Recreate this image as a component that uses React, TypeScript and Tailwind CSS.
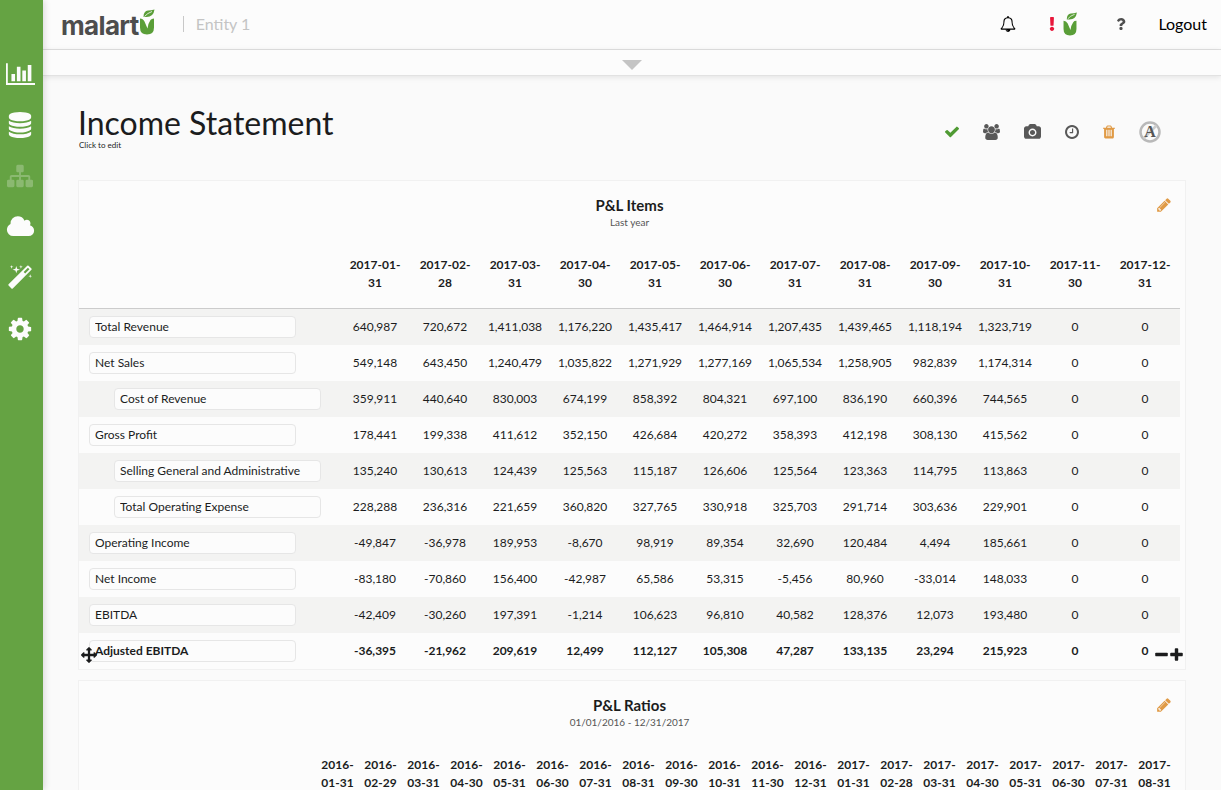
import React from 'react';
import { FaExclamation, FaQuestion } from 'react-icons/fa';

interface IconProps {
  d: string;
  viewBox?: string;
  className?: string;
}

const Icon: React.FC<IconProps> = ({ d, viewBox = '0 0 1792 1792', className }) => (
  <svg viewBox={viewBox} fill="currentColor" className={className} aria-hidden="true">
    <path d={d} />
  </svg>
);

const icons = {
  chart: 'M640 896v512h-256v-512h256zm384-512v1024h-256v-1024h256zm1024 1152v128h-2048v-1536h128v1408h1920zm-640-896v768h-256v-768h256zm384-384v1152h-256v-1152h256z',
  database: 'M896 768q237 0 443-43t325-127v170q0 69-103 128t-280 93.500-385 34.500-385-34.500-280-93.500-103-128v-170q119 84 325 127t443 43zm0 768q237 0 443-43t325-127v170q0 69-103 128t-280 93.500-385 34.500-385-34.500-280-93.500-103-128v-170q119 84 325 127t443 43zm0-384q237 0 443-43t325-127v170q0 69-103 128t-280 93.500-385 34.500-385-34.500-280-93.500-103-128v-170q119 84 325 127t443 43zm0-1152q208 0 385 34.500t280 93.500 103 128v128q0 69-103 128t-280 93.500-385 34.500-385-34.500-280-93.500-103-128v-128q0-69 103-128t280-93.500 385-34.500z',
  sitemap: 'M1792 1248v320q0 40-28 68t-68 28h-320q-40 0-68-28t-28-68v-320q0-40 28-68t68-28h96v-192h-512v192h96q40 0 68 28t28 68v320q0 40-28 68t-68 28h-320q-40 0-68-28t-28-68v-320q0-40 28-68t68-28h96v-192h-512v192h96q40 0 68 28t28 68v320q0 40-28 68t-68 28h-320q-40 0-68-28t-28-68v-320q0-40 28-68t68-28h96v-192q0-52 38-90t90-38h512v-192h-96q-40 0-68-28t-28-68v-320q0-40 28-68t68-28h320q40 0 68 28t28 68v320q0 40-28 68t-68 28h-96v192h512q52 0 90 38t38 90v192h96q40 0 68 28t28 68z',
  cloud: 'M1984 1152q0 159-112.500 271.500t-271.500 112.500h-1088q-185 0-316.500-131.500t-131.500-316.500q0-132 71-241.500t187-163.500q-2-28-2-43 0-212 150-362t362-150q158 0 286.500 88t187.500 230q70-62 166-62 106 0 181 75t75 181q0 75-41 138 129 30 213 134.500t84 239.500z',
  magic: 'M1254 581l293-293-107-107-293 293zm447-293q0 27-18 45l-1286 1286q-18 18-45 18t-45-18l-198-198q-18-18-18-45t18-45l1286-1286q18-18 45-18t45 18l198 198q18 18 18 45zm-1351-190l98 30-98 30-30 98-30-98-98-30 98-30 30-98zm350 162l196 60-196 60-60 196-60-196-196-60 196-60 60-196zm930 478l98 30-98 30-30 98-30-98-98-30 98-30 30-98zm-640-640l98 30-98 30-30 98-30-98-98-30 98-30 30-98z',
  cog: 'M1152 896q0-106-75-181t-181-75-181 75-75 181 75 181 181 75 181-75 75-181zm512-109v222q0 12-8 23t-20 13l-185 28q-19 54-39 91 35 50 107 138 10 12 10 25t-9 23q-27 37-99 108t-94 71q-12 0-26-9l-138-108q-44 23-91 38-16 136-29 186-7 28-36 28h-222q-14 0-24.500-8.500t-11.500-21.500l-28-184q-49-16-90-37l-141 107q-10 9-25 9-14 0-25-11-126-114-165-168-7-10-7-23 0-12 8-23 15-21 51-66.500t54-70.500q-27-50-41-99l-183-27q-13-2-21-12.500t-8-23.500v-222q0-12 8-23t19-13l186-28q14-46 39-92-40-57-107-138-10-12-10-24 0-10 9-23 26-36 98.500-107.500t94.500-71.500q13 0 26 10l138 107q44-23 91-38 16-136 29-186 7-28 36-28h222q14 0 24.500 8.500t11.500 21.500l28 184q49 16 90 37l142-107q9-9 24-9 13 0 25 10 129 119 165 170 7 8 7 22 0 12-8 23-15 21-51 66.500t-54 70.500q26 50 41 98l183 28q13 2 21 12.500t8 23.500z',
  bell: 'M912 1696q0-16-16-16-59 0-101.500-42.500t-42.500-101.500q0-16-16-16t-16 16q0 73 51.500 124.500t124.500 51.500q16 0 16-16zm-666-288h1300q-266-300-266-832 0-51-24-105t-69-103-121.500-80.500-169.500-31.500-169.500 31.500-121.500 80.500-69 103-24 105q0 532-266 832zm1482 0q0 52-38 90t-90 38h-448q0 106-75 181t-181 75-181-75-75-181h-448q-52 0-90-38t-38-90q50-42 91-88t85-119.500 74.500-158.500 50-206 19.500-260q0-152 117-282.500t307-158.500q-8-19-8-39 0-40 28-68t68-28 68 28 28 68q0 20-8 39 190 28 307 158.500t117 282.500q0 139 19.500 260t50 206 74.500 158.500 85 119.500 91 88z',
  check: 'M1671 566q0 40-28 68l-724 724-136 136q-28 28-68 28t-68-28l-136-136-362-362q-28-28-28-68t28-68l136-136q28-28 68-28t68 28l294 295 656-657q28-28 68-28t68 28l136 136q28 28 28 68z',
  users: 'M593 896q-162 5-265 128h-134q-82 0-138-40.500t-56-118.500q0-353 124-353 6 0 43.500 21t97.500 42.500 119 21.500q67 0 133-23-5 37-5 66 0 139 81 256zm1071 637q0 120-73 189.500t-194 69.500h-874q-121 0-194-69.500t-73-189.500q0-53 3.500-103.500t14-109 26.500-108.500 43-97.500 62-81 85.500-53.500 111.500-20q10 0 43 21.500t73 48 107 48 135 21.500 135-21.500 107-48 73-48 43-21.500q61 0 111.500 20t85.500 53.500 62 81 43 97.500 26.500 108.500 14 109 3.500 103.500zm-1024-1277q0 106-75 181t-181 75-181-75-75-181 75-181 181-75 181 75 75 181zm704 384q0 159-112.500 271.500t-271.500 112.500-271.500-112.500-112.500-271.500 112.500-271.500 271.500-112.500 271.500 112.500 112.500 271.500zm576 225q0 78-56 118.500t-138 40.500h-134q-103-123-265-128 81-117 81-256 0-29-5-66 66 23 133 23 59 0 119-21.500t97.500-42.500 43.500-21q124 0 124 353zm-128-609q0 106-75 181t-181 75-181-75-75-181 75-181 181-75 181 75 75 181z',
  camera: 'M896 672q119 0 203.500 84.500t84.500 203.500-84.500 203.500-203.500 84.500-203.500-84.500-84.500-203.500 84.500-203.500 203.500-84.500zm704-416q106 0 181 75t75 181v896q0 106-75 181t-181 75h-1408q-106 0-181-75t-75-181v-896q0-106 75-181t181-75h224l51-136q19-49 69.500-84.500t103.500-35.500h512q53 0 103.500 35.500t69.500 84.500l51 136h224zm-704 1152q185 0 316.500-131.500t131.500-316.500-131.500-316.500-316.500-131.500-316.500 131.500-131.500 316.500 131.500 316.500 316.500 131.500z',
  clock: 'M1024 544v448q0 14-9 23t-23 9h-320q-14 0-23-9t-9-23v-64q0-14 9-23t23-9h224v-352q0-14 9-23t23-9h64q14 0 23 9t9 23zm416 352q0-148-73-273t-198-198-273-73-273 73-198 198-73 273 73 273 198 198 273 73 273-73 198-198 73-273zm224 0q0 209-103 385.500t-279.500 279.500-385.500 103-385.500-103-279.500-279.500-103-385.500 103-385.500 279.500-279.500 385.500-103 385.500 103 279.500 279.500 103 385.500z',
  trash: 'M704 1376v-704q0-14-9-23t-23-9h-64q-14 0-23 9t-9 23v704q0 14 9 23t23 9h64q14 0 23-9t9-23zm256 0v-704q0-14-9-23t-23-9h-64q-14 0-23 9t-9 23v704q0 14 9 23t23 9h64q14 0 23-9t9-23zm256 0v-704q0-14-9-23t-23-9h-64q-14 0-23 9t-9 23v704q0 14 9 23t23 9h64q14 0 23-9t9-23zm-544-992h448l-48-117q-7-9-17-11h-317q-10 2-17 11zm928 32v64q0 14-9 23t-23 9h-96v948q0 83-47 143.500t-113 60.500h-832q-66 0-113-58.500t-47-141.500v-952h-96q-14 0-23-9t-9-23v-64q0-14 9-23t23-9h309l70-167q15-37 54-63t79-26h320q40 0 79 26t54 63l70 167h309q14 0 23 9t9 23z',
  pencil: 'M491 1536l91-91-235-235-91 91v107h128v128h107zm523-928q0-22-22-22-10 0-17 7l-542 542q-7 7-7 17 0 22 22 22 10 0 17-7l542-542q7-7 7-17zm-54-192l416 416-832 832h-416v-416zm683 96q0 53-37 90l-166 166-416-416 166-165q36-38 90-38 53 0 91 38l235 234q37 39 37 91z',
  move: 'M1792 896q0 26-19 45l-256 256q-19 19-45 19t-45-19-19-45v-128h-384v384h128q26 0 45 19t19 45-19 45l-256 256q-19 19-45 19t-45-19l-256-256q-19-19-19-45t19-45 45-19h128v-384h-384v128q0 26-19 45t-45 19-45-19l-256-256q-19-19-19-45t19-45l256-256q19-19 45-19t45 19 19 45v128h384v-384h-128q-26 0-45-19t-19-45 19-45l256-256q19-19 45-19t45 19l256 256q19 19 19 45t-19 45-45 19h-128v384h384v-128q0-26 19-45t45-19 45 19l256 256q19 19 19 45z',
  minus: 'M1600 736v192q0 40-28 68t-68 28h-1216q-40 0-68-28t-28-68v-192q0-40 28-68t68-28h1216q40 0 68 28t28 68z',
  plus: 'M1600 736v192q0 40-28 68t-68 28h-416v416q0 40-28 68t-68 28h-192q-40 0-68-28t-28-68v-416h-416q-40 0-68-28t-28-68v-192q0-40 28-68t68-28h416v-416q0-40 28-68t68-28h192q40 0 68 28t28 68v416h416q40 0 68 28t28 68z',
};

// Sprout mark, shared by the logo and the status badge
const Sprout: React.FC<{ className?: string }> = ({ className }) => (
  <svg viewBox="0 0 16 26" className={className} aria-hidden="true">
    <path d="M1 9.500Q4 9.500 5.500 12.500L8.500 19.500Q9 14.500 11.500 11Q12.500 9.500 15 9.500V18.500Q15 25.500 8 25.500Q1 25.500 1 18.500Z" fill="#5a9e38" />
    <path d="M4.500 8Q4.500 2 9 1.500Q12 1.500 15.500 0.500Q14.500 8 7.500 8Q5.500 8 4.500 8Z" fill="#5a9e38" />
    <path d="M5.500 7.500Q8.500 4 13 2.500" stroke="#fcfcfc" strokeWidth="0.800" fill="none" />
  </svg>
);

const navItems = [
  { label: 'Dashboards', d: icons.chart, viewBox: '0 0 2048 1792', className: 'h-[26px] w-[29px]' },
  { label: 'Data', d: icons.database, className: 'size-[26px]' },
  { label: 'Entities', d: icons.sitemap, className: 'size-[26px] opacity-25' },
  { label: 'Cloud', d: icons.cloud, viewBox: '0 0 2048 1792', className: 'h-[26px] w-[29px]' },
  { label: 'Wizard', d: icons.magic, className: 'size-[26px]' },
  { label: 'Settings', d: icons.cog, className: 'size-[26px]' },
];

const itemDates = [
  '2017-01-31', '2017-02-28', '2017-03-31', '2017-04-30', '2017-05-31', '2017-06-30',
  '2017-07-31', '2017-08-31', '2017-09-30', '2017-10-31', '2017-11-30', '2017-12-31',
];

const ratioDates = [
  '2016-01-31', '2016-02-29', '2016-03-31', '2016-04-30', '2016-05-31', '2016-06-30', '2016-07-31',
  '2016-08-31', '2016-09-30', '2016-10-31', '2016-11-30', '2016-12-31', '2017-01-31', '2017-02-28',
  '2017-03-31', '2017-04-30', '2017-05-31', '2017-06-30', '2017-07-31', '2017-08-31',
];

interface Row {
  name: string;
  indent?: boolean;
  active?: boolean;
  values: string[];
}

const rows: Row[] = [
  { name: 'Total Revenue', values: ['640,987', '720,672', '1,411,038', '1,176,220', '1,435,417', '1,464,914', '1,207,435', '1,439,465', '1,118,194', '1,323,719', '0', '0'] },
  { name: 'Net Sales', values: ['549,148', '643,450', '1,240,479', '1,035,822', '1,271,929', '1,277,169', '1,065,534', '1,258,905', '982,839', '1,174,314', '0', '0'] },
  { name: 'Cost of Revenue', indent: true, values: ['359,911', '440,640', '830,003', '674,199', '858,392', '804,321', '697,100', '836,190', '660,396', '744,565', '0', '0'] },
  { name: 'Gross Profit', values: ['178,441', '199,338', '411,612', '352,150', '426,684', '420,272', '358,393', '412,198', '308,130', '415,562', '0', '0'] },
  { name: 'Selling General and Administrative', indent: true, values: ['135,240', '130,613', '124,439', '125,563', '115,187', '126,606', '125,564', '123,363', '114,795', '113,863', '0', '0'] },
  { name: 'Total Operating Expense', indent: true, values: ['228,288', '236,316', '221,659', '360,820', '327,765', '330,918', '325,703', '291,714', '303,636', '229,901', '0', '0'] },
  { name: 'Operating Income', values: ['-49,847', '-36,978', '189,953', '-8,670', '98,919', '89,354', '32,690', '120,484', '4,494', '185,661', '0', '0'] },
  { name: 'Net Income', values: ['-83,180', '-70,860', '156,400', '-42,987', '65,586', '53,315', '-5,456', '80,960', '-33,014', '148,033', '0', '0'] },
  { name: 'EBITDA', values: ['-42,409', '-30,260', '197,391', '-1,214', '106,623', '96,810', '40,582', '128,376', '12,073', '193,480', '0', '0'] },
  { name: 'Adjusted EBITDA', active: true, values: ['-36,395', '-21,962', '209,619', '12,499', '112,127', '105,308', '47,287', '133,135', '23,294', '215,923', '0', '0'] },
];

const Sidebar: React.FC = () => (
  <nav className="relative z-10 flex w-[43px] shrink-0 flex-col bg-[#65a343] pt-12 shadow-[2px_0_6px_rgba(0,0,0,0.12)]">
    {navItems.map((item) => (
      <a key={item.label} href="#" aria-label={item.label} className="flex h-[51px] items-center justify-center pr-[3px] text-[#fcfcfc]">
        <Icon d={item.d} viewBox={item.viewBox} className={item.className} />
      </a>
    ))}
  </nav>
);

const Header: React.FC = () => (
  <header className="flex h-[50px] shrink-0 items-center border-b border-[#e2e2e2] bg-[#fcfcfc] pr-3.5 pb-px pl-[18px]">
    <a href="#" className="flex items-end" aria-label="malartu">
      <span className="font-[Inter,sans-serif] text-[26px] leading-[26px] font-bold tracking-tight text-[#4d4d4d]">malart</span>
      <Sprout className="mb-1 h-[26px] w-4" />
    </a>
    <span className="ml-7 h-4 w-px bg-[#c8c8c8]" />
    <span className="ml-3 text-base text-[#c4c4c4]">Entity 1</span>
    <div className="ml-auto flex items-center text-[#4f4f4f]">
      <button aria-label="Notifications" className="mr-8 text-black">
        <Icon d={icons.bell} className="size-4" />
      </button>
      <button aria-label="Status" className="mr-[38px] flex items-center gap-1.5">
        <FaExclamation className="h-3.5 w-2 text-[#e8173b]" />
        <Sprout className="h-6 w-4" />
      </button>
      <button aria-label="Help" className="mr-8">
        <FaQuestion className="h-3 w-2.5" />
      </button>
      <a href="#" className="text-base text-black">Logout</a>
    </div>
  </header>
);

const Toolbar: React.FC = () => (
  <div className="flex items-center gap-6 pt-2.5 pr-[25px] text-[#585858]">
    <button aria-label="Save" className="text-[#4f9a33]">
      <Icon d={icons.check} viewBox="120 320 1552 1220" className="h-3 w-3.5" />
    </button>
    <button aria-label="Share">
      <Icon d={icons.users} viewBox="0 0 1920 1792" className="h-4 w-[17px]" />
    </button>
    <button aria-label="Snapshot">
      <Icon d={icons.camera} viewBox="-64 0 1920 1792" className="h-4 w-[17px]" />
    </button>
    <button aria-label="Schedule">
      <Icon d={icons.clock} viewBox="128 128 1536 1536" className="size-3.5" />
    </button>
    <button aria-label="Delete" className="text-[#e09a45]">
      <Icon d={icons.trash} viewBox="192 128 1408 1536" className="h-3.5 w-3" />
    </button>
    <button aria-label="Annotations off">
      <svg viewBox="0 0 22 22" className="size-[22px]" aria-hidden="true">
        <circle cx="11" cy="11" r="9.500" fill="none" stroke="#b9b9b9" strokeWidth="2.500" />
        <path d="M17.500 4.500L4.500 17.500" stroke="#cccccc" strokeWidth="2.500" />
        <text x="11" y="16" textAnchor="middle" fontFamily="Liberation Serif, serif" fontSize="16" fontWeight="bold" fill="#555555">A</text>
      </svg>
    </button>
  </div>
);

interface CardProps {
  title: string;
  subtitle: string;
  children: React.ReactNode;
}

const Card: React.FC<CardProps> = ({ title, subtitle, children }) => (
  <section className="mb-2.5 border border-[#f1f1f1] bg-[#fcfcfc] pr-[5px]">
    <div className="relative pt-[15px] pb-[26px] text-center">
      <h2 className="text-[15px] leading-[18px] font-bold">{title}</h2>
      <p className="text-[10px] leading-4 text-[#555555]">{subtitle}</p>
      <button aria-label={`Edit ${title}`} className="absolute top-4 right-2 text-[#e09a45]">
        <Icon d={icons.pencil} className="size-4" />
      </button>
    </div>
    {children}
  </section>
);

const ItemsTable: React.FC = () => (
  <table className="w-full table-fixed text-xs leading-[18px]">
    <thead>
      <tr className="border-b border-[#cccccc]">
        <th className="w-[261px]" />
        {itemDates.map((date) => (
          <th key={date} className="px-2 pb-4 align-top font-bold">{date}</th>
        ))}
      </tr>
    </thead>
    <tbody>
      {rows.map((row, i) => (
        <tr key={row.name} className={`h-9 ${i % 2 === 0 ? 'bg-[#f3f3f2]' : ''} ${row.active ? 'font-bold' : ''}`}>
          <td className={`relative ${row.indent ? 'pl-[35px]' : 'pl-2.5'}`}>
            <input
              aria-label={row.name}
              defaultValue={row.name}
              className="block h-[22px] w-[207px] rounded border border-[#e6e6e6] bg-[#fcfcfc] px-[5px]"
            />
            {row.active && (
              <button aria-label="Move row" className="absolute top-3.5 left-0.5">
                <Icon d={icons.move} className="size-4" />
              </button>
            )}
          </td>
          {row.values.map((value, j) => (
            <td key={j} className="relative text-center">
              {value}
              {row.active && j === row.values.length - 1 && (
                <span className="absolute top-3.5 -right-1 flex">
                  <button aria-label="Remove row"><Icon d={icons.minus} viewBox="128 0 1536 1792" className="h-4 w-[15px]" /></button>
                  <button aria-label="Add row"><Icon d={icons.plus} viewBox="128 0 1536 1792" className="h-4 w-[15px]" /></button>
                </span>
              )}
            </td>
          ))}
        </tr>
      ))}
    </tbody>
  </table>
);

const RatiosTable: React.FC = () => (
  <div className="pr-1">
    <table className="w-full table-fixed text-xs leading-[18px]">
      <thead>
        <tr className="border-b border-[#cccccc]">
          <th className="w-[237px]" />
          {ratioDates.map((date) => (
            <th key={date} className="px-1 pb-4 align-top font-bold">{date}</th>
          ))}
        </tr>
      </thead>
    </table>
  </div>
);

export default function App() {
  return (
    <div className="flex h-screen overflow-hidden bg-[#fafafa] font-[Lato,sans-serif] text-[#1b1c1d]">
      <Sidebar />
      <div className="flex min-w-0 flex-1 flex-col">
        <Header />
        <button aria-label="Expand filters" className="relative flex h-[26px] w-full shrink-0 items-center justify-center border-b border-[#e2e2e2] bg-[#fcfcfc] shadow-[0_1px_6px_rgba(0,0,0,0.1)]">
          <svg viewBox="0 0 20 10" className="mt-1 h-2.5 w-5 fill-[#c4c4c4]" aria-hidden="true">
            <path d="M0 0H20L10 10Z" />
          </svg>
        </button>
        <main className="flex-1 overflow-y-auto px-[35px] [scrollbar-width:none]">
          <div className="flex h-[104px] items-center justify-between pb-[3px]">
            <div>
              <h1 className="text-[32px] leading-9">Income Statement</h1>
              <p className="pl-px text-[8px] leading-2">Click to edit</p>
            </div>
            <Toolbar />
          </div>
          <Card title="P&amp;L Items" subtitle="Last year">
            <ItemsTable />
          </Card>
          <Card title="P&amp;L Ratios" subtitle="01/01/2016 - 12/31/2017">
            <RatiosTable />
          </Card>
        </main>
      </div>
    </div>
  );
}
